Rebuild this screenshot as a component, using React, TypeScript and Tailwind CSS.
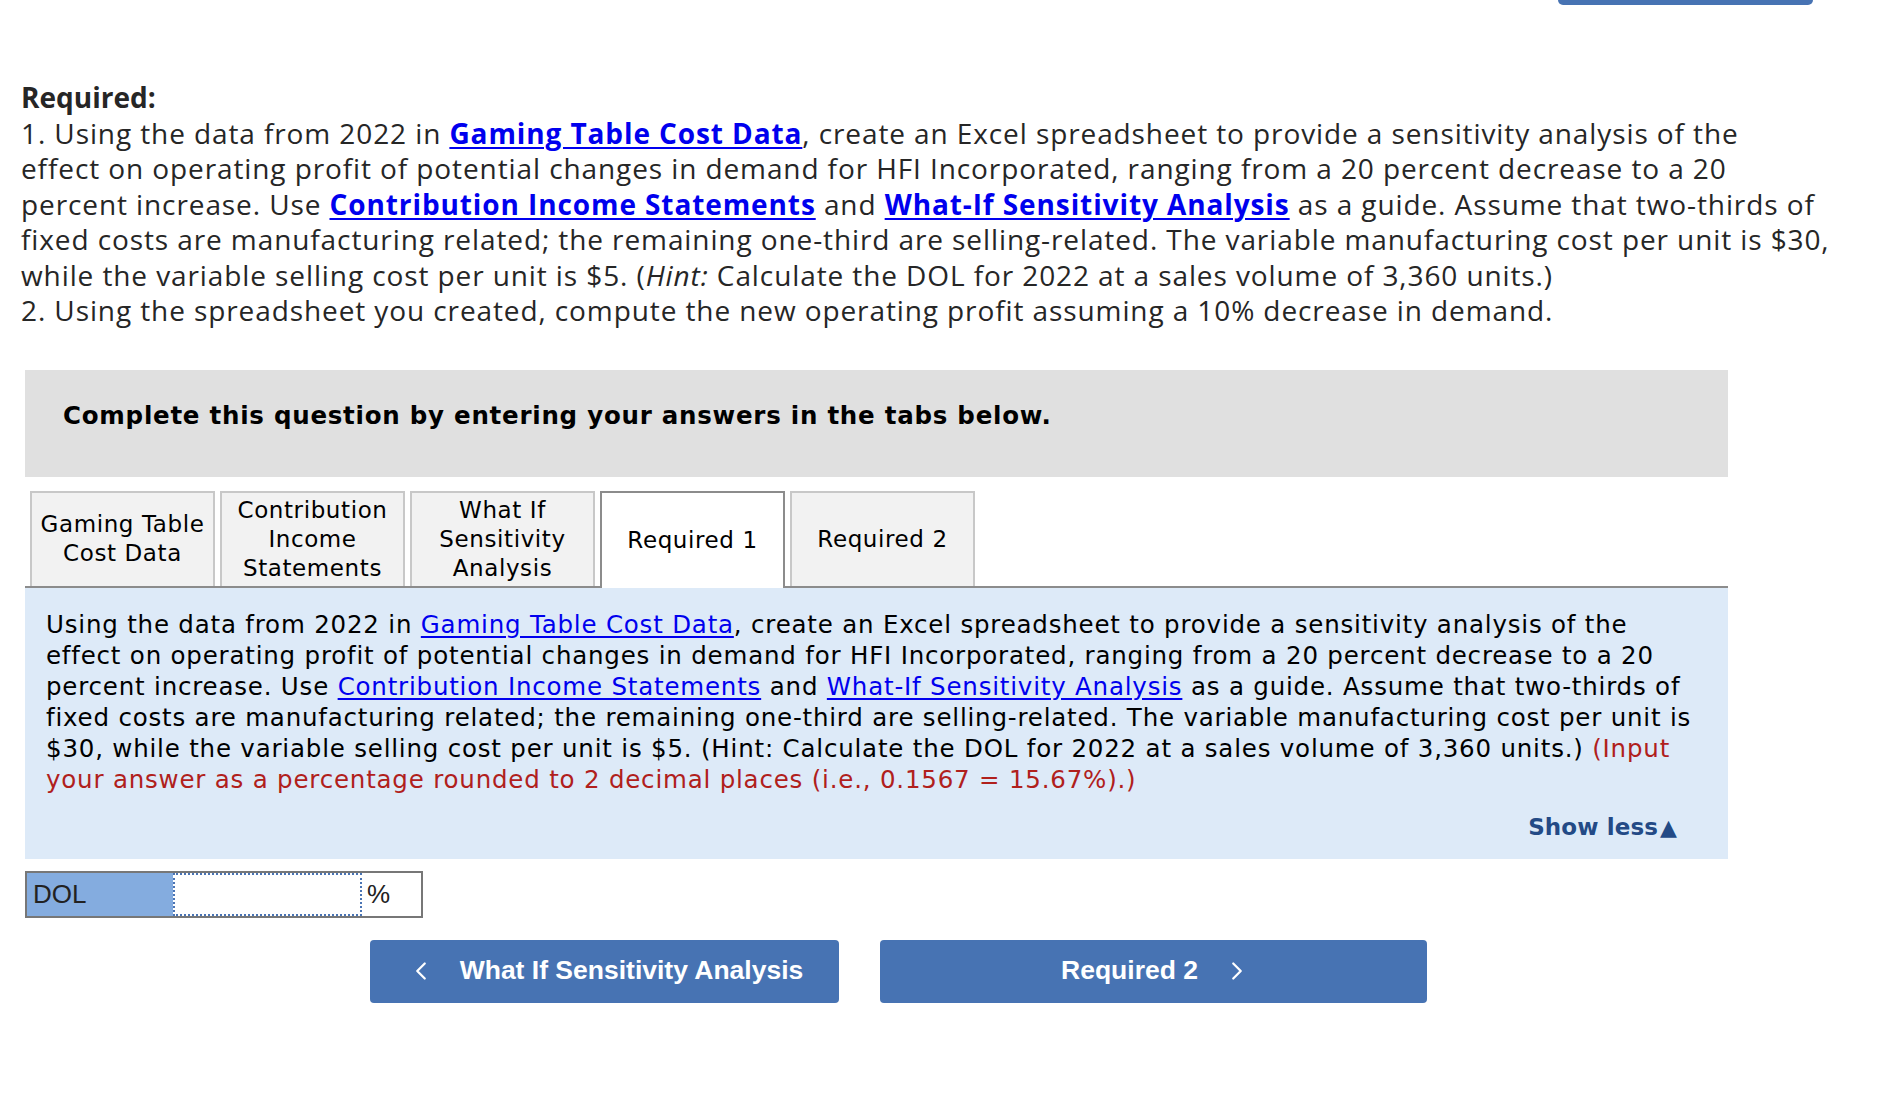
import { ChevronLeft, ChevronRight } from "lucide-react"

const tabs = [
  { label: ["Gaming Table", "Cost Data"], active: false },
  { label: ["Contribution", "Income", "Statements"], active: false },
  { label: ["What If", "Sensitivity", "Analysis"], active: false },
  { label: ["Required 1"], active: true },
  { label: ["Required 2"], active: false },
]

function TopLink({ children }: { children: React.ReactNode }) {
  return <a href="#" className="font-bold text-[#0000ee] underline decoration-2 underline-offset-[3px]">{children}</a>
}

function PanelLink({ children }: { children: React.ReactNode }) {
  return <a href="#" className="text-[#0000ee] underline underline-offset-[3px]">{children}</a>
}

export default function App() {
  return (
    <div className="min-h-screen w-full bg-white">
      {/* partially scrolled-off button at the top */}
      <div className="ml-[1558px] h-[5px] w-[255px] rounded-b-[7px] bg-[#4773b3]" />

      <div className="pl-[21px] pt-[75px] font-['Open_Sans',Arial,sans-serif] text-[28px] leading-[35.5px] tracking-[0.9px] text-[#262626] whitespace-nowrap">
        <p className="font-bold tracking-normal">Required:</p>
        <p>
          1. Using the data from 2022 in <TopLink>Gaming Table Cost Data</TopLink>, create an Excel spreadsheet to provide a sensitivity analysis of the
          <br />
          effect on operating profit of potential changes in demand for HFI Incorporated, ranging from a 20 percent decrease to a 20
          <br />
          percent increase. Use <TopLink>Contribution Income Statements</TopLink> and <TopLink>What-If Sensitivity Analysis</TopLink> as a guide. Assume that two-thirds of
          <br />
          fixed costs are manufacturing related; the remaining one-third are selling-related. The variable manufacturing cost per unit is $30,
          <br />
          while the variable selling cost per unit is $5. (<i>Hint:</i> Calculate the DOL for 2022 at a sales volume of 3,360 units.)
        </p>
        <p>2. Using the spreadsheet you created, compute the new operating profit assuming a 10% decrease in demand.</p>
      </div>

      <div className="ml-[25px] w-[1703px] font-['DejaVu_Sans',Verdana,sans-serif]">
        <div className="mt-[41px] h-[107px] bg-[#e0e0e0] pl-[38px] pt-[31px]">
          <p className="text-[24.5px] font-bold leading-[29px] tracking-[0.75px] text-black">Complete this question by entering your answers in the tabs below.</p>
        </div>

        <div className="mt-[14px] flex gap-[5px] pl-[5px]">
          {tabs.map((t) => (
            <div
              key={t.label.join(" ")}
              className={
                t.active
                  ? "relative z-10 -mb-[2px] flex h-[97px] w-[185px] flex-col items-center justify-center border-2 border-b-0 border-[#8c8c8c] bg-white text-center text-[23px] leading-[29px] tracking-[0.6px] text-black"
                  : "flex h-[95px] w-[185px] flex-col items-center justify-center border-2 border-b-0 border-[#c8c8c8] bg-[#f2f2f2] text-center text-[23px] leading-[29px] tracking-[0.6px] text-black"
              }
            >
              {t.label.map((l) => (
                <span key={l}>{l}</span>
              ))}
            </div>
          ))}
        </div>

        <div className="border-t-2 border-[#8c8c8c] bg-[#ddeaf8] pb-[17px] pl-[21px] pr-[30px] pt-[21px]">
          <p className="whitespace-nowrap text-[24.5px] leading-[31px] tracking-[0.8px] text-black">
            Using the data from 2022 in <PanelLink>Gaming Table Cost Data</PanelLink>, create an Excel spreadsheet to provide a sensitivity analysis of the
            <br />
            effect on operating profit of potential changes in demand for HFI Incorporated, ranging from a 20 percent decrease to a 20
            <br />
            percent increase. Use <PanelLink>Contribution Income Statements</PanelLink> and <PanelLink>What-If Sensitivity Analysis</PanelLink> as a guide. Assume that two-thirds of
            <br />
            fixed costs are manufacturing related; the remaining one-third are selling-related. The variable manufacturing cost per unit is
            <br />
            $30, while the variable selling cost per unit is $5. (Hint: Calculate the DOL for 2022 at a sales volume of 3,360 units.) <span className="text-[#b0201c]">(Input</span>
            <br />
            <span className="text-[#b0201c]">your answer as a percentage rounded to 2 decimal places (i.e., 0.1567 = 15.67%).)</span>
          </p>
          <div className="mt-[18px] flex justify-end pr-[21px]">
            <button className="flex items-center gap-[2px] text-[23px] font-bold leading-[29px] tracking-[0.1px] text-[#234a86]">
              Show less<span className="text-[22px] leading-[29px]">▲</span>
            </button>
          </div>
        </div>

        <div className="mt-[12px] flex h-[47px] w-[398px] border-2 border-[#777] font-['Liberation_Sans',Arial,sans-serif] text-[26px] text-[#222]">
          <div className="flex w-[146px] items-center bg-[#84acdf] pl-[6px]">DOL</div>
          <div className="w-[189px] border-2 border-dotted border-[#4a74b4] bg-white" />
          <div className="flex flex-1 items-center bg-white pl-[5px]">%</div>
        </div>
      </div>

      <div className="mt-[22px] flex gap-[41px] pl-[370px] font-['Liberation_Sans',Arial,sans-serif]">
        <button className="flex h-[63px] w-[469px] items-center justify-center gap-[24px] rounded-[4px] bg-[#4773b3] text-[26.5px] font-bold text-white">
          <ChevronLeft size={30} strokeWidth={1.8} />
          What If Sensitivity Analysis
        </button>
        <button className="flex h-[63px] w-[547px] items-center justify-center gap-[24px] rounded-[4px] bg-[#4773b3] text-[26.5px] font-bold text-white">
          <span className="pl-[6px]">Required 2</span>
          <ChevronRight size={30} strokeWidth={1.8} />
        </button>
      </div>
    </div>
  )
}
